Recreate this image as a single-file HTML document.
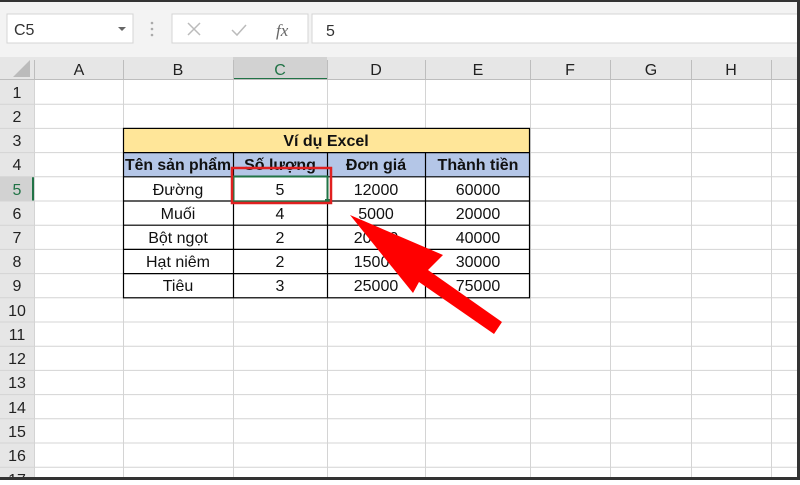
<!DOCTYPE html><html><head><meta charset="utf-8"><style>
body{margin:0;width:800px;height:480px;overflow:hidden;background:#fff;font-family:"Liberation Sans",sans-serif}
svg text{font-family:"Liberation Sans","DejaVu Sans",sans-serif}
</style></head><body>
<svg width="800" height="480" viewBox="0 0 800 480" xmlns="http://www.w3.org/2000/svg">
<rect width="800" height="57" fill="#f3f3f3"/>
<rect width="800" height="2" fill="#333"/>
<rect x="7" y="14" width="126" height="29" fill="#fff" stroke="#d4d4d4"/>
<text x="14" y="35" font-size="16" fill="#333">C5</text>
<path d="M118 27l4 4 4-4z" fill="#666"/>
<circle cx="152" cy="23" r="1.3" fill="#aaa"/><circle cx="152" cy="29" r="1.3" fill="#aaa"/><circle cx="152" cy="35" r="1.3" fill="#aaa"/>
<rect x="172" y="14" width="136" height="29" fill="#fff" stroke="#d4d4d4"/>
<path d="M188 23l12 12M200 23l-12 12" stroke="#bbb" stroke-width="1.5"/>
<path d="M232 30l5 5 9-10" stroke="#bbb" stroke-width="1.5" fill="none"/>
<text x="276" y="36" font-size="17" font-style="italic" style="font-family:'Liberation Serif',serif" fill="#666">fx</text>
<rect x="312" y="14" width="488" height="29" fill="#fff" stroke="#d4d4d4"/>
<text x="326" y="36" font-size="16" fill="#333">5</text>
<rect x="0" y="57" width="800" height="23" fill="#e6e6e6"/>
<rect x="0" y="80" width="34" height="400" fill="#e6e6e6"/>
<rect x="233" y="57" width="94" height="23" fill="#d2d2d2"/>
<rect x="233" y="78" width="94" height="2" fill="#217346"/>
<rect x="0" y="177" width="34" height="24" fill="#d2d2d2"/>
<rect x="32" y="177" width="2" height="24" fill="#217346"/>
<path d="M30 60v17h-17z" fill="#bbb"/>
<g stroke="#d4d4d4" stroke-width="1">
<path d="M34.5 80V480M123.5 80V480M233.5 80V480M327.5 80V480M425.5 80V480M530.5 80V480M610.5 80V480M691.5 80V480M771.5 80V480"/>
<path d="M0 104.2H800M0 128.4H800M0 152.6H800M0 176.8H800M0 201H800M0 225.2H800M0 249.4H800M0 273.6H800M0 297.8H800M0 322H800M0 346.2H800M0 370.4H800M0 394.6H800M0 418.8H800M0 443H800M0 467.2H800"/>
</g>
<g stroke="#bdbdbd"><path d="M34.5 60V80M123.5 60V80M233.5 60V80M327.5 60V80M425.5 60V80M530.5 60V80M610.5 60V80M691.5 60V80M771.5 60V80M0 79.5H800"/></g>
<g font-size="16" fill="#222" text-anchor="middle">
<text x="79" y="75">A</text><text x="178" y="75">B</text><text x="280" y="75" fill="#217346">C</text><text x="376" y="75">D</text><text x="478" y="75">E</text><text x="570" y="75">F</text><text x="651" y="75">G</text><text x="731" y="75">H</text>
</g>
<g font-size="16" fill="#222" text-anchor="middle">
<text x="17" y="98">1</text><text x="17" y="122">2</text><text x="17" y="146">3</text><text x="17" y="170">4</text><text x="17" y="195" fill="#217346">5</text><text x="17" y="219">6</text><text x="17" y="243">7</text><text x="17" y="267">8</text><text x="17" y="291">9</text><text x="17" y="316">10</text><text x="17" y="340">11</text><text x="17" y="364">12</text><text x="17" y="388">13</text><text x="17" y="413">14</text><text x="17" y="437">15</text><text x="17" y="461">16</text><text x="17" y="485">17</text>
</g>
<rect x="123.5" y="128.4" width="406" height="24.2" fill="#ffe699"/>
<rect x="123.5" y="152.6" width="406" height="24.2" fill="#b4c6e7"/>
<g stroke="#000" stroke-width="1.2" fill="none">
<rect x="123.5" y="128.4" width="406" height="169.4"/>
<path d="M123.5 152.6H529.5M123.5 176.8H529.5M123.5 201H529.5M123.5 225.2H529.5M123.5 249.4H529.5M123.5 273.6H529.5"/>
<path d="M233.5 152.6V297.8M327.5 152.6V297.8M425.5 152.6V297.8"/>
</g>
<g font-size="16" fill="#111" text-anchor="middle">
<text x="326" y="146" font-weight="bold">Ví dụ Excel</text>
<g font-weight="bold"><text x="178" y="170" textLength="106" lengthAdjust="spacingAndGlyphs">Tên sản phẩm</text><text x="280" y="170">Số lượng</text><text x="376" y="170">Đơn giá</text><text x="478" y="170">Thành tiền</text></g>
<text x="178" y="195">Đường</text><text x="280" y="195">5</text><text x="376" y="195">12000</text><text x="478" y="195">60000</text>
<text x="178" y="219">Muối</text><text x="280" y="219">4</text><text x="376" y="219">5000</text><text x="478" y="219">20000</text>
<text x="178" y="243">Bột ngọt</text><text x="280" y="243">2</text><text x="376" y="243">20000</text><text x="478" y="243">40000</text>
<text x="178" y="267">Hạt niêm</text><text x="280" y="267">2</text><text x="376" y="267">15000</text><text x="478" y="267">30000</text>
<text x="178" y="291">Tiêu</text><text x="280" y="291">3</text><text x="376" y="291">25000</text><text x="478" y="291">75000</text>
</g>
<rect x="233.5" y="176.5" width="94" height="25" fill="none" stroke="#217346" stroke-width="2"/>
<rect x="325" y="199" width="5" height="5" fill="#217346"/>
<rect x="232" y="168" width="99" height="35" fill="none" stroke="#e02020" stroke-width="2.5"/>
<polygon points="350,215 443,255 428,270 502,322 494,334 419,282 413,293" fill="#ff0000"/>
<rect x="0" y="477" width="800" height="3" fill="#333"/>
<rect x="797" y="0" width="3" height="480" fill="#333"/>
</svg>
</body></html>
